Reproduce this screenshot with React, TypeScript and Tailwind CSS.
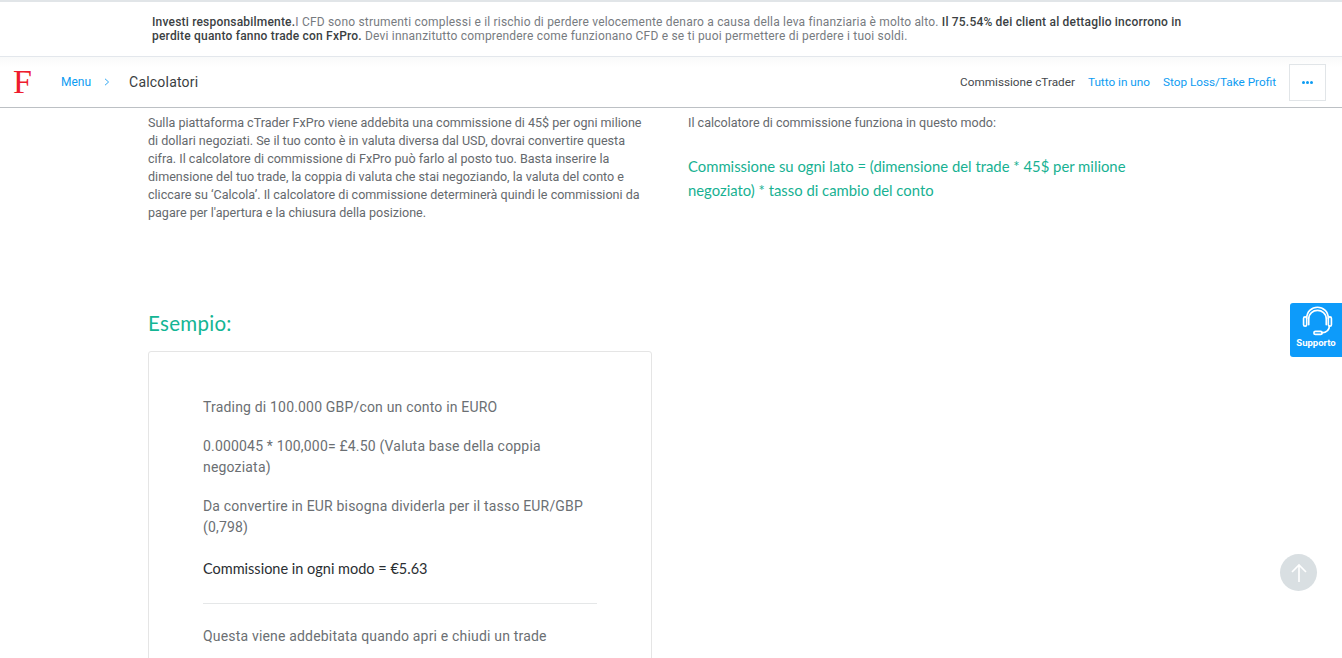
import React from "react";

const roboto = "font-['Roboto',sans-serif]";
const futura = "font-['Lato',sans-serif]";

function Headset() {
  return (
    <svg className="ml-[3px]" width="33" height="33" viewBox="0 0 32 32" fill="none" stroke="white" strokeWidth="1.6" strokeLinecap="round" strokeLinejoin="round">
      <path d="M5.5 14 C5.5 -0.5 26.5 -0.5 26.5 14" />
      <rect x="2.5" y="12.5" width="3" height="9" rx="1.5" />
      <rect x="26.5" y="12.5" width="3" height="9" rx="1.5" />
      <path d="M7.5 20 V14.5 C7.5 3.5 24.5 3.5 24.5 14.5 V20" />
      <path d="M27.5 21.5 C27.5 26 24 27.5 20 28" />
      <rect x="12.5" y="26.5" width="8" height="3" rx="1.5" />
    </svg>
  );
}

export default function App() {
  return (
    <div className={`relative h-[658px] overflow-hidden bg-white ${roboto}`}>
      <div className="h-[57px] border-t-2 border-b border-t-[#e1e5e8] border-b-[#e3e7ec] pt-[13px] pl-[152px]">
        <p className="w-[1040px] text-[12px] leading-[14px] tracking-[0.195px] text-[#777b7f]">
          <b className="font-medium text-[#3b3f43]">Investi responsabilmente.</b>I CFD sono strumenti complessi e il rischio di perdere velocemente denaro a causa della leva finanziaria è molto alto.{" "}
          <b className="font-medium text-[#3b3f43]">Il 75.54% dei client al dettaglio incorrono in perdite quanto fanno trade con FxPro.</b>{" "}
          Devi innanzitutto comprendere come funzionano CFD e se ti puoi permettere di perdere i tuoi soldi.
        </p>
      </div>

      <nav className="flex h-[51px] items-center border-b border-[#bcc0c4] bg-gradient-to-b from-[#f9fafa] to-white to-[20%] pr-4 text-[11.75px]">
        <span className="ml-[13px] w-[48px] font-['Liberation_Serif',serif] text-[34px] leading-none text-[#ee1c2e]">F</span>
        <a className="text-[12px] text-[#0d9cf2]">Menu</a>
        <svg className="ml-[13px]" width="6" height="8" viewBox="0 0 6 8" fill="none" stroke="#36a9f2" strokeWidth="1">
          <path d="M1 0.8 L4.6 4 L1 7.2" />
        </svg>
        <span className="ml-[19px] text-[14px] tracking-[0.2px] text-[#3a3e42]">Calcolatori</span>
        <div className="ml-auto flex items-center">
          <span className="pt-[1px] text-[#44484c]">Commissione cTrader</span>
          <a className="ml-[13px] pt-[1px] text-[#0d9cf2]">Tutto in uno</a>
          <a className="ml-[13px] pt-[1px] text-[#0d9cf2]">Stop Loss/Take Profit</a>
          <button className="ml-[13px] flex h-[37px] w-[37px] items-center justify-center gap-[1px] border border-[#e1e5e8]">
            <i className="h-[3px] w-[3px] rounded-full bg-[#0d9cf2]" />
            <i className="h-[3px] w-[3px] rounded-full bg-[#0d9cf2]" />
            <i className="h-[3px] w-[3px] rounded-full bg-[#0d9cf2]" />
          </button>
        </div>
      </nav>

      <main className="pl-[148px]">
        <div className="flex gap-[36px]">
          <p className="w-[504px] pt-[6px] text-[12.56px] leading-[18px] text-[#65696d]">
            Sulla piattaforma cTrader FxPro viene addebita una commissione di 45$ per ogni milione di dollari negoziati. Se il tuo conto è in valuta diversa dal USD, dovrai convertire questa cifra. Il calcolatore di commissione di FxPro può farlo al posto tuo. Basta inserire la dimensione del tuo trade, la coppia di valuta che stai negoziando, la valuta del conto e cliccare su ‘Calcola’. Il calcolatore di commissione determinerà quindi le commissioni da pagare per l'apertura e la chiusura della posizione.
          </p>
          <div className="w-[470px] pt-[6px]">
            <p className="text-[12.56px] leading-[18px] text-[#65696d]">Il calcolatore di commissione funziona in questo modo:</p>
            <p className={`mt-[22px] text-[14.85px] leading-[24px] text-[#17b192] ${futura}`}>
              Commissione su ogni lato = (dimensione del trade * 45$ per milione negoziato) * tasso di cambio del conto
            </p>
          </div>
        </div>

        <h2 className={`mt-[87px] text-[20.5px] leading-[28px] tracking-[0.3px] text-[#14b594] ${futura}`}>Esempio:</h2>
        <section className="mt-[14px] h-[400px] w-[504px] rounded-[3px] border border-[#e5e5e5] pt-[45px] pr-[54px] pl-[54px] text-[14px] leading-[21px] tracking-[0.18px] text-[#6b6f73]">
          <p>Trading di 100.000 GBP/con un conto in EURO</p>
          <p className="mt-[18px]">0.000045 * 100,000= £4.50 (Valuta base della coppia negoziata)</p>
          <p className="mt-[18px]">Da convertire in EUR bisogna dividerla per il tasso EUR/GBP (0,798)</p>
          <p className={`mt-[20px] text-[14.5px] tracking-normal text-[#2a2e32] ${futura}`}>Commissione in ogni modo = €5.63</p>
          <hr className="mt-[24px] border-[#e5e7e8]" />
          <p className="mt-[22px]">Questa viene addebitata quando apri e chiudi un trade</p>
        </section>
      </main>

      <div className="absolute top-[303px] left-[1290px] flex h-[54px] w-[52px] flex-col items-center rounded-l-[3px] bg-[#0d9bfa] pt-[1px] text-white">
        <Headset />
        <span className="text-[9.5px] leading-[12px] font-bold">Supporto</span>
      </div>

      <div className="absolute top-[554px] left-[1280px] flex h-[37px] w-[37px] items-center justify-center rounded-full bg-[#d9dfe2]">
        <svg width="18" height="20" viewBox="0 0 18 20" fill="none" stroke="white" strokeWidth="1.6">
          <path d="M9 19 V2 M2 9 L9 2 L16 9" />
        </svg>
      </div>
    </div>
  );
}
